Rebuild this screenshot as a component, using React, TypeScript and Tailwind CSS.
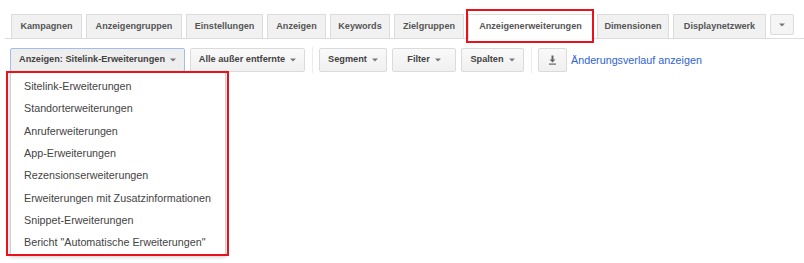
import React from "react";

const tabs: { label: string; w: string; active?: boolean }[] = [
  { label: "Kampagnen", w: "w-[71px]" },
  { label: "Anzeigengruppen", w: "w-[96px]" },
  { label: "Einstellungen", w: "w-[77px]" },
  { label: "Anzeigen", w: "w-[59px]" },
  { label: "Keywords", w: "w-[60px]" },
  { label: "Zielgruppen", w: "w-[70px]" },
  { label: "Anzeigenerweiterungen", w: "w-[125px]", active: true },
  { label: "Dimensionen", w: "w-[72px]" },
  { label: "Displaynetzwerk", w: "w-[93px]" },
];

const items = [
  "Sitelink-Erweiterungen",
  "Standorterweiterungen",
  "Anruferweiterungen",
  "App-Erweiterungen",
  "Rezensionserweiterungen",
  "Erweiterungen mit Zusatzinformationen",
  "Snippet-Erweiterungen",
  'Bericht "Automatische Erweiterungen"',
];

function Caret() {
  return (
    <svg width="6" height="4" viewBox="0 0 6 4" className="shrink-0">
      <path d="M0 0.5 L6 0.5 L3 3.5 Z" fill="#777" />
    </svg>
  );
}

const normal = "border-[#dadada] bg-gradient-to-b from-[#f9f9f9] to-[#f0f0f0]";

function Btn({ label, w, look = normal }: { label: string; w: string; look?: string }) {
  return (
    <div
      className={`h-[24px] ${w} flex items-center justify-center gap-[5px] rounded-[2px] border text-[9.2px] font-bold text-[#444] whitespace-nowrap ${look}`}
    >
      <span>{label}</span>
      <Caret />
    </div>
  );
}

export default function App() {
  return (
    <div
      className="w-[804px] h-[263px] bg-white relative overflow-hidden"
      style={{ fontFamily: '"Liberation Sans", Arial, sans-serif' }}
    >
      {/* Tabs */}
      <div className="pt-[14px] ml-[5px] border-b border-[#dcdcdc]">
        <div className="flex items-end gap-[4px] pl-[6px]">
          {tabs.map((t) => (
            <div key={t.label} className={`relative ${t.w}`}>
              <div
                className={`flex items-center justify-center text-[9.1px] font-bold border border-b-0 text-[#555] ${
                  t.active
                    ? "bg-white border-[#dcdcdc] h-[25px] -mb-px"
                    : "bg-[#f1f1f1] border-[#dcdcdc] h-[24px]"
                }`}
              >
                {t.label}
              </div>
              {t.active && (
                <div className="absolute -left-[2px] -right-[1px] -top-[5px] -bottom-[5px] border-2 border-[#e8121a] pointer-events-none" />
              )}
            </div>
          ))}
          <div className="w-[24px] h-[21px] mb-[3px] flex items-center justify-center bg-[#f5f5f5] border border-[#dcdcdc] rounded-[2px]">
            <Caret />
          </div>
        </div>
      </div>

      {/* Toolbar */}
      <div className="flex items-center mt-[8px] pl-[10px]">
        <div className="relative">
          <Btn label="Anzeigen: Sitelink-Erweiterungen" w="w-[175px]" look="border-[#a4bde8] bg-[#eeeeee]" />
          {/* dropdown menu */}
          <div className="absolute left-0 top-[24px] w-[216px] bg-white border border-[#cfcfcf] shadow-[0_2px_4px_rgba(0,0,0,0.2)] pt-[2px] pb-[1px] z-10">
            {items.map((it) => (
              <div
                key={it}
                className="h-[22.3px] flex items-center pl-[13px] text-[10.75px] text-[#444] whitespace-nowrap"
              >
                {it}
              </div>
            ))}
          </div>
          <div className="absolute left-[-4px] top-[23px] w-[223px] h-[185px] border-2 border-[#e8121a] z-20 pointer-events-none" />
        </div>
        <div className="ml-[5px]">
          <Btn label="Alle außer entfernte" w="w-[115px]" />
        </div>
        <div className="w-px h-[26px] bg-[#ececec] ml-[7px] mr-[6px]" />
        <Btn label="Segment" w="w-[68px]" />
        <div className="ml-[5px]">
          <Btn label="Filter" w="w-[64px]" />
        </div>
        <div className="ml-[5px]">
          <Btn label="Spalten" w="w-[63px]" />
        </div>
        <div className="w-px h-[26px] bg-[#ececec] ml-[7px] mr-[6px]" />
        <div className="w-[29px] h-[24px] flex items-center justify-center rounded-[2px] border border-[#dadada] bg-gradient-to-b from-[#f9f9f9] to-[#f0f0f0]">
          <svg width="9" height="10" viewBox="0 0 9 10">
            <rect x="3.5" y="0.5" width="2" height="5" fill="#666" />
            <path d="M1.5 4.5 L7.5 4.5 L4.5 7.5 Z" fill="#666" />
            <rect x="1" y="8.5" width="7" height="1.2" fill="#666" />
          </svg>
        </div>
        <span className="ml-[4px] text-[10.75px] text-[#2f62d1]">Änderungsverlauf anzeigen</span>
      </div>
    </div>
  );
}
